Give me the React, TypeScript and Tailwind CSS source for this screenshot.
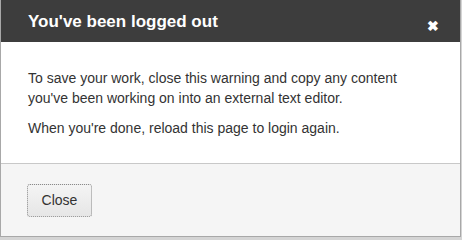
import React from "react";

export default function App() {
  return (
    <div className="w-[462px] h-[240px] bg-[#d4d4d4] overflow-hidden" style={{ fontFamily: '"Liberation Sans", Arial, sans-serif' }}>
      <div className="w-[461px] border-x border-b border-[#a8a8a8] bg-white">
        <div className="h-[42px] bg-[#3d3d3d] flex items-center justify-between pl-[27px] pr-[21px]">
          <h1 className="text-white font-bold text-[17px] leading-none pt-[1px]">You've been logged out</h1>
          <span className="text-white font-bold text-[14px] leading-none mt-[9px]">✖</span>
        </div>
        <div className="px-[27px] pt-[26px] pb-[25px] text-[14px] leading-[20px] text-[#333] border-b border-[#c8c8c8]">
          <p>To save your work, close this warning and copy any content you've been working on into an external text editor.</p>
          <p className="mt-[10px]">When you're done, reload this page to login again.</p>
        </div>
        <div className="bg-[#f5f5f5] px-[26px] pt-[20px] pb-[19px]">
          <button className="w-[65px] h-[33px] rounded-[3px] border border-dotted border-[#8a8a8a] bg-[linear-gradient(#f4f4f4,#e6e6e6)] text-[14px] text-[#333]">
            Close
          </button>
        </div>
      </div>
    </div>
  );
}
